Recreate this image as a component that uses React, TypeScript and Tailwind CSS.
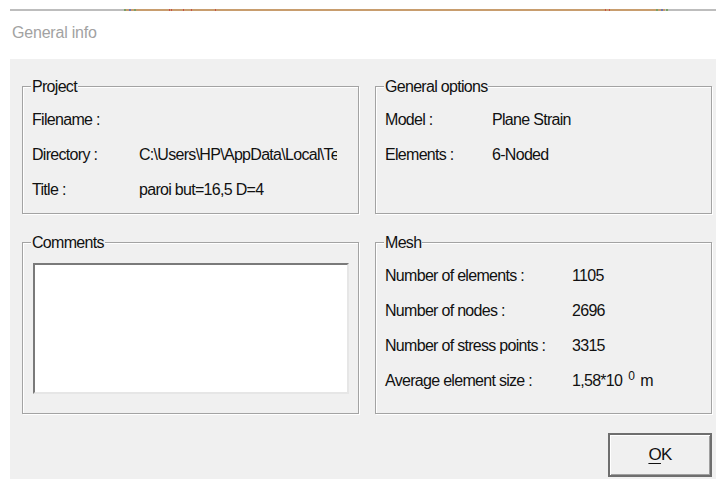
import React from 'react';

const body = "font-['Liberation_Sans',Arial,sans-serif] text-[16px] tracking-[-0.7px] text-[#111111]";

type Row = { label: string; value?: React.ReactNode };

const GroupBox: React.FC<{ title: string; className?: string; children: React.ReactNode }> = ({ title, className, children }) => (
  <fieldset
    className={`border border-[#a3a3a3] shadow-[1px_1px_0_#ffffff,inset_1px_1px_0_#ffffff] ${className ?? ''}`}
  >
    <legend className="ml-[8px] px-[1px] leading-[17px] bg-[#f0f0f0]">{title}</legend>
    {children}
  </fieldset>
);

const Rows: React.FC<{ rows: Row[]; labelWidth: string }> = ({ rows, labelWidth }) => (
  <div className="pt-[7px] px-[9px]">
    {rows.map((r) => (
      <div key={r.label} className="h-[35px] flex items-center whitespace-nowrap">
        <span className={`${labelWidth} shrink-0`}>{r.label}</span>
        <span className="flex-1 overflow-hidden">{r.value}</span>
      </div>
    ))}
  </div>
);

// thin progress strip left over from the window above
const TopStrip = () => (
  <svg width="716" height="2" className="block mt-[9px]">
    <rect x="10" y="0" width="114" height="2" fill="#bdbdbd" />
    <rect x="124" y="0" width="541" height="2" fill="#c89d6e" />
    <rect x="665" y="0" width="51" height="2" fill="#bdbdbd" />
    {[124, 134, 656, 666].map((x) => (
      <rect key={x} x={x} y="0" width="2" height="2" fill="#7aa36a" />
    ))}
    {[129, 661].map((x) => (
      <rect key={x} x={x} y="0" width="2" height="2" fill="#6b78b5" />
    ))}
    {[169, 171, 183, 191, 215, 605, 609].map((x) => (
      <rect key={x} x={x} y="0" width="1" height="2" fill="#c9504a" />
    ))}
  </svg>
);

export default function App() {
  return (
    <div className="w-[716px] h-[479px] bg-white overflow-hidden flex flex-col">
      <TopStrip />
      <div className="mt-[12px] pl-[12px] leading-[20px] text-[16px] tracking-[-0.2px] text-[#a2a2a2] font-['Liberation_Sans',Arial,sans-serif]">
        General info
      </div>

      <div className={`mt-[16px] ml-[10px] flex-1 bg-[#f0f0f0] pl-[12px] pr-[4px] pt-[19px] ${body}`}>
        <div className="grid grid-cols-[337px_337px] gap-x-[16px] gap-y-[20px]">
          <GroupBox title="Project" className="h-[136px]">
            <Rows
              labelWidth="w-[107px]"
              rows={[
                { label: 'Filename :' },
                { label: 'Directory :', value: <span className="block w-[198px] overflow-hidden">C:\Users\HP\AppData\Local\Temp\</span> },
                { label: 'Title :', value: 'paroi but=16,5 D=4' },
              ]}
            />
          </GroupBox>

          <GroupBox title="General options" className="h-[136px]">
            <Rows
              labelWidth="w-[107px]"
              rows={[
                { label: 'Model :', value: 'Plane Strain' },
                { label: 'Elements :', value: '6-Noded' },
              ]}
            />
          </GroupBox>

          <GroupBox title="Comments" className="h-[180px]">
            <textarea
              readOnly
              className="block ml-[10px] mt-[12px] w-[316px] h-[131px] resize-none bg-white border-2 border-t-[#7a7a7a] border-l-[#7a7a7a] border-b-[#e6e6e6] border-r-[#e6e6e6] outline-none"
            />
          </GroupBox>

          <GroupBox title="Mesh" className="h-[180px]">
            <Rows
              labelWidth="w-[187px]"
              rows={[
                { label: 'Number of elements :', value: '1105' },
                { label: 'Number of nodes :', value: '2696' },
                { label: 'Number of stress points :', value: '3315' },
                {
                  label: 'Average element size :',
                  value: (
                    <>
                      1,58*10<sup className="mx-[6px] text-[12px] top-[-0.5em]">0</sup>m
                    </>
                  ),
                },
              ]}
            />
          </GroupBox>
        </div>

        <div className="flex justify-end mt-[19px]">
          <button className="w-[104px] h-[44px] border-2 border-[#6e6e6e] bg-[#f0f0f0] shadow-[inset_1px_1px_0_#ffffff,inset_-1px_-1px_0_#a0a0a0] flex items-center justify-center text-[17px]">
            <span>
              <span className="underline underline-offset-[3px]">O</span>K
            </span>
          </button>
        </div>
      </div>
    </div>
  );
}
